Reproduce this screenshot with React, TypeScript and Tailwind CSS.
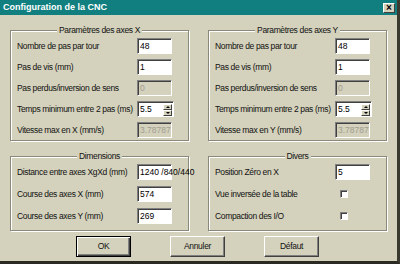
import React from 'react';

const font = { fontFamily: '"Liberation Sans", Arial, sans-serif' };

type Kind = 'text' | 'disabled' | 'spin' | 'check' | 'wide';

function Box({ value, kind }: { value?: string; kind: Kind }) {
  if (kind === 'check') {
    return (
      <div className="ml-[4px] mr-[38px] h-[8px] w-[8px] shrink-0 bg-white border border-t-[#808080] border-l-[#808080] border-b-white border-r-white shadow-[inset_1px_1px_0_#404040]" />
    );
  }
  const sunken =
    'h-[16px] shrink-0 border border-t-[#808080] border-l-[#808080] border-b-white border-r-white shadow-[inset_1px_1px_0_#404040] flex items-center pl-[2px] text-[8.5px] leading-none';
  if (kind === 'spin') {
    return (
      <div className={`${sunken} w-[37px] mr-[14px] bg-white pr-[1px]`}>
        <span className="flex-1 text-black">{value}</span>
        <div className="flex flex-col h-[12px] w-[9px] mt-[1px]">
          <div className="flex-1 bg-[#d4d1bc] border-t border-l border-t-white border-l-white border-b border-r border-b-[#404040] border-r-[#404040] flex items-center justify-center">
            <div className="w-0 h-0 border-l-[2px] border-r-[2px] border-b-[2px] border-l-transparent border-r-transparent border-b-black" />
          </div>
          <div className="flex-1 bg-[#d4d1bc] border-t border-l border-t-white border-l-white border-b border-r border-b-[#404040] border-r-[#404040] flex items-center justify-center">
            <div className="w-0 h-0 border-l-[2px] border-r-[2px] border-t-[2px] border-l-transparent border-r-transparent border-t-black" />
          </div>
        </div>
      </div>
    );
  }
  if (kind === 'disabled') {
    return <div className={`${sunken} w-[35px] mr-[16px] bg-[#d4d1bc] text-[#a09d90]`}>{value}</div>;
  }
  return (
    <div className={`${sunken} w-[35px] mr-[16px] bg-white text-black whitespace-nowrap overflow-visible`}>
      {value}
    </div>
  );
}

function Row({ label, value, kind = 'text' }: { label: string; value?: string; kind?: Kind }) {
  return (
    <div className="flex items-center h-[16px] pl-[6px] min-w-0">
      <span className="flex-1 min-w-0 text-[8.5px] tracking-[-0.35px] leading-none text-[#111] whitespace-nowrap">
        {label}
      </span>
      <Box value={value} kind={kind} />
    </div>
  );
}

function Group({ title, gap, children, pb }: { title: string; gap: string; pb: string; children: React.ReactNode }) {
  return (
    <fieldset
      className={`min-w-0 border border-[#8a8878] shadow-[inset_1px_1px_0_#fff,1px_1px_0_#fff] px-0 ${pb}`}
    >
      <legend className="mx-auto px-[2px] h-[11px] text-[8.5px] tracking-[-0.35px] leading-[11px] text-[#111] bg-[#d4d1bc]">
        {title}
      </legend>
      <div className={`flex flex-col ${gap} pt-[2px]`}>{children}</div>
    </fieldset>
  );
}

function Button({ label, def }: { label: string; def?: boolean }) {
  const cls = def
    ? 'border border-black shadow-[inset_1px_1px_0_#fff,inset_-1px_-1px_0_#404040,inset_-2px_-2px_0_#808080]'
    : 'border border-t-white border-l-white border-b-[#404040] border-r-[#404040] shadow-[inset_-1px_-1px_0_#808080]';
  return (
    <div className={`w-[55px] h-[21px] flex items-center justify-center text-[8.5px] tracking-[-0.3px] text-[#111] ${cls}`}>
      {label}
    </div>
  );
}

export default function App() {
  return (
    <div
      style={font}
      className="w-[400px] h-[264px] bg-[#d4d1bc] flex flex-col border-r-[3px] border-b-[3px] border-r-[#3a3a30] border-b-[#2a2a22] overflow-hidden"
    >
      <div className="h-[15px] bg-[#117f7f] flex items-center justify-between pl-[3px] pr-[2px]">
        <span className="text-white font-bold text-[9px] leading-none">Configuration de la CNC</span>
        <div className="w-[12px] h-[10px] bg-[#d4d1bc] border border-t-white border-l-white border-b-[#404040] border-r-[#404040] flex items-center justify-center text-[10px] font-bold leading-none text-black">
          ×
        </div>
      </div>

      <div className="grid grid-cols-[179px_179px] gap-x-[19px] pl-[10px] mt-[10px]">
        <Group title="Paramètres des axes X" gap="gap-[5px]" pb="pb-[2px]">
          <Row label="Nombre de pas par tour" value="48" />
          <Row label="Pas de vis (mm)" value="1" />
          <Row label="Pas perdus/inversion de sens" value="0" kind="disabled" />
          <Row label="Temps minimum entre 2 pas (ms)" value="5.5" kind="spin" />
          <Row label="Vitesse max en X (mm/s)" value="3.78787" kind="disabled" />
        </Group>
        <Group title="Paramètres des axes Y" gap="gap-[5px]" pb="pb-[2px]">
          <Row label="Nombre de pas par tour" value="48" />
          <Row label="Pas de vis (mm)" value="1" />
          <Row label="Pas perdus/inversion de sens" value="0" kind="disabled" />
          <Row label="Temps minimum entre 2 pas (ms)" value="5.5" kind="spin" />
          <Row label="Vitesse max en Y (mm/s)" value="3.78787" kind="disabled" />
        </Group>
      </div>

      <div className="grid grid-cols-[179px_179px] gap-x-[19px] pl-[10px] mt-[10px]">
        <Group title="Dimensions" gap="gap-[6px]" pb="pb-[6px]">
          <Row label="Distance entre axes XgXd (mm)" value="1240 /840/440" kind="wide" />
          <Row label="Course des axes X (mm)" value="574" />
          <Row label="Course des axes Y (mm)" value="269" />
        </Group>
        <Group title="Divers" gap="gap-[6px]" pb="pb-[6px]">
          <Row label="Position Zéro en X" value="5" />
          <Row label="Vue inversée de la table" kind="check" />
          <Row label="Compaction des I/O" kind="check" />
        </Group>
      </div>

      <div className="flex justify-center gap-[39px] mt-[5px] pr-[2px]">
        <Button label="OK" def />
        <Button label="Annuler" />
        <Button label="Défaut" />
      </div>
    </div>
  );
}
